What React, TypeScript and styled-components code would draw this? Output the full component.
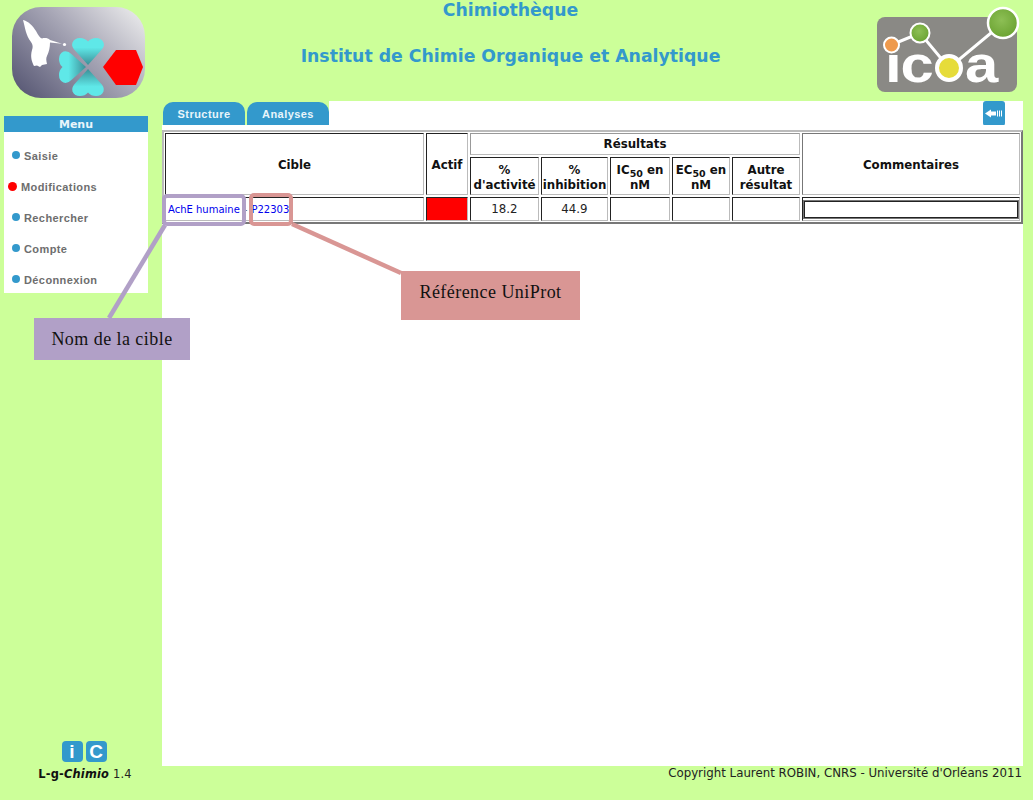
import React from "react";
import styled, { createGlobalStyle } from "styled-components";

const Global = createGlobalStyle`
  html, body { margin: 0; padding: 0; background: #ccff99; }
  body { font-family: "DejaVu Sans", Verdana, sans-serif; }
`;

const Page = styled.div`
  position: relative;
  width: 1033px;
  height: 800px;
  overflow: hidden;
  background: #ccff99;
  display: grid;
  grid-template-columns: 162px 1fr;
  grid-template-rows: 101px 1fr;
`;

const Header = styled.header`
  grid-column: 1 / 3;
  display: flex;
  align-items: flex-start;
  padding: 7px 12px 0 12px;
`;

const Titles = styled.div`
  flex: 1;
  margin-top: -7px;
  display: flex;
  flex-direction: column;
  align-items: center;
  color: #3399cc;
  font-weight: bold;
`;

const Title = styled.h1`
  margin: 0;
  font-size: 17.3px;
  line-height: 20px;
`;

const Subtitle = styled.h2`
  margin: 26px 0 0;
  font-size: 17.3px;
  line-height: 20px;
`;

const Sidebar = styled.aside`
  display: flex;
  flex-direction: column;
  padding: 15px 14px 19px 4px;
`;

const Menu = styled.nav`
  background: #fff;
  height: 177px;
  display: flex;
  flex-direction: column;
`;

const MenuTitle = styled.div`
  background: #3399cc;
  color: #e8f5fb;
  height: 16px;
  text-align: center;
  font: bold 11px/17px "DejaVu Sans", sans-serif;
  margin-bottom: 8px;
`;

const MenuItem = styled.div<{ $active?: boolean }>`
  flex: none;
  height: 31.1px;
  display: flex;
  align-items: center;
  gap: 4px;
  padding-left: ${(p) => (p.$active ? "4px" : "8px")};
  color: #6e6e6e;
  font: bold 11px "Liberation Sans", Arial, sans-serif;
  letter-spacing: 0.4px;
`;

const Dot = styled.span<{ $active?: boolean }>`
  width: ${(p) => (p.$active ? "9px" : "8px")};
  height: ${(p) => (p.$active ? "9px" : "8px")};
  margin-top: -1px;
  border-radius: 50%;
  background: ${(p) => (p.$active ? "#ff0000" : "#3399cc")};
`;

const Brand = styled.div`
  margin-top: auto;
  display: flex;
  flex-direction: column;
  align-items: center;
  gap: 5px;
  padding-left: 18px;
`;

const Tiles = styled.div`
  display: flex;
  gap: 3px;
  margin-right: 2px;
`;

const Tile = styled.span`
  width: 21px;
  height: 21px;
  border-radius: 4px;
  background: #3399cc;
  color: #fff;
  display: flex;
  align-items: center;
  justify-content: center;
  font: bold 19px/21px "Liberation Sans", Arial, sans-serif;
`;

const BrandName = styled.div`
  font-size: 11.4px;
  line-height: 14px;
  color: #222;
  white-space: nowrap;
  letter-spacing: 0.2px;
`;

const Strong = styled.b`
  color: #111;
`;

const Column = styled.main`
  display: flex;
  flex-direction: column;
  min-height: 0;
`;

const TabBar = styled.div`
  display: flex;
  height: 24px;
  margin-right: 10px;
  padding-left: 1px;
`;

const Tab = styled.div`
  width: 82px;
  margin-right: 2px;
  margin-top: 1px;
  background: #3399cc;
  color: #e8f5fb;
  border-radius: 10px 10px 0 0;
  text-align: center;
  font: bold 11px/24px "Liberation Sans", Arial, sans-serif;
  letter-spacing: 0.45px;
`;

const TabFill = styled.div`
  flex: 1;
  margin-left: -2px;
  background: #fff;
  display: flex;
  justify-content: flex-end;
  padding-right: 18px;
`;

const BackIcon = styled.svg`
  width: 22px;
  height: 25px;
`;

const Content = styled.section`
  background: #fff;
  box-sizing: border-box;
  height: 641px;
  margin-right: 10px;
  padding-top: 5px;
`;

const Table = styled.table`
  width: 861px;
  table-layout: fixed;
  border-collapse: separate;
  border-spacing: 2px;
  border: 1px solid;
  border-color: #bbb #777 #777 #bbb;
  box-shadow: inset 1px 1px 0 #bbb, inset -1px -1px 0 #777;
  box-sizing: border-box;
`;

const Th = styled.th`
  border: 1px solid;
  border-color: #222 #bbb #bbb #222;
  padding: 3px 0 0;
  font-size: 11.8px;
  line-height: 15px;
  font-weight: bold;
  color: #111;
  text-align: center;
`;

const ThResults = styled(Th)`
  height: 20px;
  padding: 0;
  border-color: #999 #bbb #bbb #999;
`;

const ThSub = styled(Th)`
  height: 33px;
`;

const ThComment = styled(Th)`
  border-color: #777 #bbb #bbb #777;
`;

const Sub = styled.sub`
  font-size: 9.5px;
  line-height: 0;
`;

const Td = styled.td`
  border: 1px solid;
  border-color: #222 #bbb #bbb #222;
  padding: 0;
  font-size: 11.8px;
  color: #222;
  text-align: center;
  height: 22px;
`;

const TdLinks = styled(Td)`
  text-align: left;
  padding-left: 2px;
  white-space: nowrap;
`;

const TdActive = styled(Td)`
  background: #ff0000;
`;

const CellLink = styled.a`
  color: #0000ee;
  font-size: 10px;
  text-decoration: none;
`;

const Sep = styled.span`
  font-size: 10px;
  margin: 0 4px;
  color: #555;
`;

const Comment = styled.div`
  margin: 0 1px;
  height: 15px;
  border: 1px solid #222;
  box-shadow: 0 0 0 1px #777;
`;

const Footer = styled.footer`
  margin-right: 11px;
  text-align: right;
  font-size: 11.8px;
  line-height: 15px;
  color: #222;
`;

const Leaders = styled.svg`
  position: absolute;
  inset: 0;
  width: 1033px;
  height: 800px;
  pointer-events: none;
`;

const NameFrame = styled.div`
  position: absolute;
  left: 162px;
  top: 194px;
  width: 84px;
  height: 32px;
  box-sizing: border-box;
  border: 4px solid #b1a0c7;
  border-radius: 5px;
`;

const RefFrame = styled.div`
  position: absolute;
  left: 249px;
  top: 193px;
  width: 44px;
  height: 33px;
  box-sizing: border-box;
  border: 4px solid #d99694;
  border-radius: 5px;
`;

const Callout = styled.div`
  position: absolute;
  display: flex;
  align-items: center;
  justify-content: center;
  color: #111;
  font: 18px "Liberation Serif", "DejaVu Serif", serif;
  letter-spacing: 0.45px;
`;

const NameCallout = styled(Callout)`
  left: 34px;
  top: 318px;
  width: 156px;
  height: 42px;
  background: #b1a0c7;
`;

const RefCallout = styled(Callout)`
  left: 401px;
  top: 271px;
  width: 179px;
  height: 49px;
  box-sizing: border-box;
  padding-bottom: 6px;
  background: #d99694;
`;

const HEART = "M0 -2 L-12.5 -16 Q-17 -20.5 -15.5 -24.5 Q-13.5 -29 -8 -29 Q-3 -29 0 -25.5 Q3 -29 8 -29 Q13.5 -29 15.5 -24.5 Q17 -20.5 12.5 -16 Z";

const ChimioLogo = () => (
  <svg width="134" height="92" viewBox="12 7 134 92" style={{ flex: "none" }}>
    <defs>
      <linearGradient id="plate" x1="0" y1="0.85" x2="1" y2="0.15">
        <stop offset="0" stopColor="#5a5a76" />
        <stop offset="0.55" stopColor="#a5a4b4" />
        <stop offset="1" stopColor="#e6e6e8" />
      </linearGradient>
      <linearGradient id="petal" x1="0" y1="1" x2="0" y2="0">
        <stop offset="0" stopColor="#3c8f97" />
        <stop offset="0.65" stopColor="#5fe8e8" />
      </linearGradient>
    </defs>
    <rect x="12" y="7" width="133" height="91" rx="29" fill="url(#plate)" />
    <g transform="translate(88 67)" fill="url(#petal)">
      <path d={HEART} />
      <path d={HEART} transform="rotate(180)" />
      <path d={HEART} transform="rotate(-90)" />
    </g>
    <path d="M116 50 H136 L143 67 L136 85 H116 L103 67 Z" fill="#ff0000" />
    <path
      d="M23 20 C28 21 33 26 36 31 C38 35 40 38 42 38.5 C45 37.5 48 38 50 40 L62 43.8 L50 42.5 C50 47 49 52 47 56 C46 58 46 60 47 64 L42 65 L40 67 L37 65.5 L34 66 C32 62 30 57 32 50 C33 47 33 45 31 42 C26 36 25 27 23 20 Z"
      fill="#fff"
    />
    <circle cx="64.5" cy="44.5" r="1.6" fill="#fff" />
  </svg>
);

const IcoaLogo = () => (
  <svg width="146" height="90" viewBox="875 4 146 90" style={{ flex: "none", marginTop: -3 }}>
    <defs>
      <radialGradient id="leaf" cx="0.45" cy="0.4" r="0.6">
        <stop offset="0" stopColor="#8dbf55" />
        <stop offset="1" stopColor="#6ba332" />
      </radialGradient>
    </defs>
    <rect x="877" y="17" width="140" height="75" rx="8" fill="#8a8985" />
    <path d="M891 45 L920 33 L949 68 L1003 23" stroke="#fff" strokeWidth="3" fill="none" />
    <g fill="#fff" fontFamily="'Liberation Sans', Arial, sans-serif" fontWeight="bold" fontSize="52">
      <text transform="translate(885 82) scale(1.15 1)">ı</text>
      <text transform="translate(900.5 82) scale(1.15 1)">c</text>
      <text transform="translate(965 82) scale(1.15 1)">a</text>
    </g>
    <circle cx="891.5" cy="45" r="7.5" fill="#ee9a4d" stroke="#fff" strokeWidth="2" />
    <circle cx="920" cy="33" r="9.5" fill="url(#leaf)" stroke="#fff" strokeWidth="2" />
    <circle cx="949" cy="68" r="12" fill="#e6dc3a" stroke="#fff" strokeWidth="4" />
    <circle cx="1003" cy="23" r="15" fill="url(#leaf)" stroke="#fff" strokeWidth="2.5" />
  </svg>
);

const menu = ["Saisie", "Modifications", "Rechercher", "Compte", "Déconnexion"];

export default function App() {
  return (
    <Page>
      <Global />
      <Header>
        <ChimioLogo />
        <Titles>
          <Title>Chimiothèque</Title>
          <Subtitle>Institut de Chimie Organique et Analytique</Subtitle>
        </Titles>
        <IcoaLogo />
      </Header>
      <Sidebar>
        <Menu>
          <MenuTitle>Menu</MenuTitle>
          {menu.map((m) => (
            <MenuItem key={m} $active={m === "Modifications"}>
              <Dot $active={m === "Modifications"} />
              {m}
            </MenuItem>
          ))}
        </Menu>
        <Brand>
          <Tiles>
            <Tile>i</Tile>
            <Tile>C</Tile>
          </Tiles>
          <BrandName>
            <Strong>L-g-<i>Chimio</i></Strong> 1.4
          </BrandName>
        </Brand>
      </Sidebar>
      <Column>
        <TabBar>
          <Tab>Structure</Tab>
          <Tab>Analyses</Tab>
          <TabFill>
            <BackIcon viewBox="0 0 22 25">
              <rect width="22" height="25" rx="3" fill="#3399cc" />
              <path d="M2 12.5 L8 8.5 V10.5 H13 V14.5 H8 V16.5 Z" fill="#fff" />
              <path d="M14.5 9.5 V15.5 M16.5 9.5 V15.5 M18.5 9.5 V15.5" stroke="#fff" strokeWidth="1" />
            </BackIcon>
          </TabFill>
        </TabBar>
        <Content>
          <Table>
            <colgroup>
              <col style={{ width: 259 }} />
              <col style={{ width: 42 }} />
              <col style={{ width: 69 }} />
              <col style={{ width: 67 }} />
              <col style={{ width: 60 }} />
              <col style={{ width: 58 }} />
              <col style={{ width: 68 }} />
              <col style={{ width: 218 }} />
            </colgroup>
            <thead>
              <tr>
                <Th rowSpan={2}>Cible</Th>
                <Th rowSpan={2}>Actif</Th>
                <ThResults colSpan={5}>Résultats</ThResults>
                <ThComment rowSpan={2}>Commentaires</ThComment>
              </tr>
              <tr>
                <ThSub>%<br />d'activité</ThSub>
                <ThSub>%<br />inhibition</ThSub>
                <ThSub>IC<Sub>50</Sub> en<br />nM</ThSub>
                <ThSub>EC<Sub>50</Sub> en<br />nM</ThSub>
                <ThSub>Autre<br />résultat</ThSub>
              </tr>
            </thead>
            <tbody>
              <tr>
                <TdLinks>
                  <CellLink>AchE humaine</CellLink>
                  <Sep>-</Sep>
                  <CellLink>P22303</CellLink>
                </TdLinks>
                <TdActive />
                <Td>18.2</Td>
                <Td>44.9</Td>
                <Td />
                <Td />
                <Td />
                <Td><Comment /></Td>
              </tr>
            </tbody>
          </Table>
        </Content>
        <Footer>Copyright Laurent ROBIN, CNRS - Université d'Orléans 2011</Footer>
      </Column>
      <Leaders viewBox="0 0 1033 800">
        <path d="M165 225 L109 318" stroke="#b1a0c7" strokeWidth="4.5" fill="none" />
        <path d="M292 224 L401 273" stroke="#d99694" strokeWidth="4.5" fill="none" />
      </Leaders>
      <NameFrame />
      <RefFrame />
      <NameCallout>Nom de la cible</NameCallout>
      <RefCallout>Référence UniProt</RefCallout>
    </Page>
  );
}
